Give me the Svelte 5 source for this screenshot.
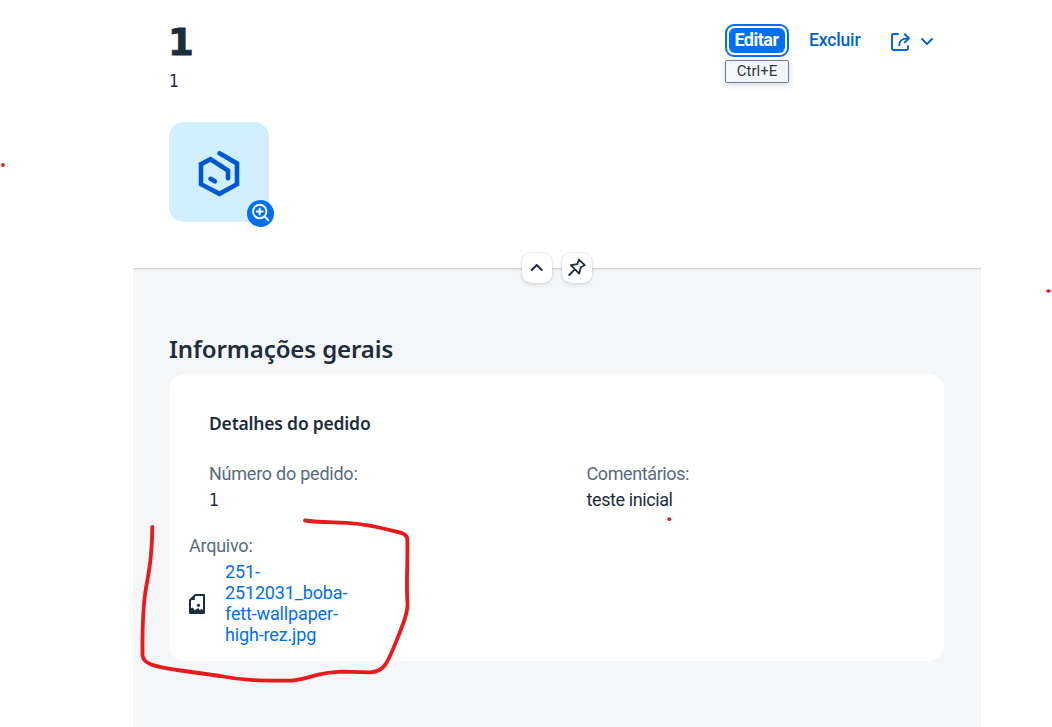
<script>
  const fileName = ['251-', '2512031_boba-', 'fett-wallpaper-', 'high-rez.jpg'];
</script>

<div class="page">
  <header>
    <div class="heading">
      <div>
        <h1>1</h1>
        <p class="sub">1</p>
      </div>
      <div class="actions">
        <div class="edit-wrap">
          <button class="edit"><span>Editar</span></button>
          <div class="tooltip">Ctrl+E</div>
        </div>
        <button class="plain">Excluir</button>
        <button class="share" aria-label="Share">
          <svg width="44" height="20" viewBox="0 0 44 20" fill="none" stroke="#0064d9" stroke-width="1.9" stroke-linecap="round" stroke-linejoin="round">
            <path d="M8 2H3.2Q2 2 2 3.2V16.8Q2 18 3.2 18H16.8Q18 18 18 16.8V14" />
            <path d="M9.3 13.3C9.3 8.8 11.2 6.6 18.4 6.3M14.8 2.2L19 6.3L14.8 10.4" />
            <path d="M32 7L37 12L42 7" />
          </svg>
        </button>
      </div>
    </div>
    <div class="avatar">
      <svg width="100" height="100" viewBox="0 0 100 100" fill="none" stroke="#0057d2" stroke-width="4.6" stroke-linecap="round" stroke-linejoin="miter">
        <path d="M50.5 31.3L68 41.4V62.2L50.5 71.8L32 62.2V42.2L41.5 37.2L59 48.6V56.3M41.5 56.8L45.8 59.3" />
      </svg>
      <div class="badge">
        <svg width="28" height="28" viewBox="0 0 28 28" fill="none" stroke="#fff" stroke-width="2" stroke-linecap="round">
          <circle cx="12.7" cy="11.5" r="6.7" />
          <path d="M17.7 16.5L21.3 20.2M12.7 8.5V14.5M9.7 11.5H15.7" />
        </svg>
      </div>
    </div>
    <div class="toggles">
      <button aria-label="Collapse">
        <svg width="30" height="30" viewBox="0 0 30 30" fill="none" stroke="#1d2d3e" stroke-width="2" stroke-linecap="round" stroke-linejoin="round"><path d="M9.7 17L14.7 12L19.7 17" /></svg>
      </button>
      <button aria-label="Pin">
        <svg width="30" height="30" viewBox="0 0 30 30" fill="none" stroke="#1d2d3e" stroke-width="1.8" stroke-linecap="round" stroke-linejoin="round"><path d="M17 6.7L22.7 12.2L18.8 14.2L17.2 20.6L8.8 12.2L15.2 11.2ZM12.6 16.6L7.2 22" /></svg>
      </button>
    </div>
  </header>
  <main>
    <h2><span>Informações gerais</span></h2>
    <section>
      <h3><span>Detalhes do pedido</span></h3>
      <div class="fields">
        <div><p class="label">Número do pedido:</p><p class="one">1</p></div>
        <div><p class="label comments">Comentários:</p><p class="value">teste inicial</p></div>
      </div>
      <div class="file">
        <p class="label">Arquivo:</p>
        <div class="file-row">
          <svg width="16" height="20" viewBox="0 0 16 20" fill="none">
            <path d="M6.3 1H15V19H1V6.3Z" stroke="#1d2d3e" stroke-width="2" stroke-linejoin="round" />
            <path d="M1 5.8L5.8 1V6H1ZM1 19V15L3.5 13.6L6 16.2L9.2 14L11 16.2L12.5 14.8L15 17V19Z" fill="#1d2d3e" />
            <circle cx="9.5" cy="11.3" r="1.6" fill="#1d2d3e" />
          </svg>
          <div class="link">{#each fileName as part}<span>{part}</span>{/each}</div>
        </div>
      </div>
    </section>
  </main>
  <svg class="ink" width="1052" height="727" viewBox="0 0 1052 727" fill="none" stroke="#e71b1b" stroke-width="3.8" stroke-linecap="round" stroke-linejoin="round">
    <path d="M152.3 527C152 556 149 572 146 588C142 611 142.5 635 142.5 655C143 665 158 667 177 670L220 676C241 680 257 681 292 680.5C308 679 318 672 342 671.7L370 672.3C385 672 388 661 396 642C402 627 408 613 407.5 603C406 583 408 558 407.3 539C407 532 395 532 379 527.5C350 520 330 524 305 520.5" />
    <g fill="#e71b1b" stroke="none"><circle cx="669.3" cy="519.2" r="1.9" /><circle cx="3" cy="165" r="1.9" /><ellipse cx="1048.5" cy="291" rx="2.3" ry="1.8" /></g>
  </svg>
</div>

<style>
  :global(body) { overflow: hidden; }
  .page { position: relative; width: 1052px; height: 727px; background: #fff; overflow: hidden; display: flex; flex-direction: column; color: #1d2d3e; font: 18px/26px Roboto, sans-serif; }
  h1, h2, h3, p { margin: 0; }
  button { border: 0; padding: 0; margin: 0; background: none; font: inherit; color: inherit; display: block; }
  svg { display: block; }
  header { position: relative; height: 268px; margin: 0 71px 0 133px; padding: 22px 0 0 36px; box-sizing: border-box; flex: none; }
  .heading { height: 100px; display: flex; justify-content: space-between; padding-right: 47px; }
  h1 { font: bold 37px/42px "DejaVu Sans", sans-serif; margin-left: -1px; -webkit-text-stroke: .9px #1d2d3e; }
  .sub { font: 17.5px/24px "DejaVu Sans Condensed", "DejaVu Sans", sans-serif; font-stretch: condensed; margin: 5px 0 0 0; }
  .one { font-family: "DejaVu Sans Condensed", "DejaVu Sans", sans-serif; font-stretch: condensed; font-size: 17.5px; }
  .actions { display: flex; align-items: flex-start; padding-top: 2px; }
  .edit-wrap { position: relative; margin-right: 20px; }
  .edit { box-sizing: border-box; width: 64px; height: 33px; border: 2.5px solid #0070f2; border-radius: 9px; padding: 2px; }
  .edit span { display: block; height: 25px; line-height: 24px; background: #0070f2; border-radius: 6px; color: #fff; font-weight: bold; font-size: 18px; letter-spacing: -.5px; text-align: center; text-indent: -1px; white-space: nowrap; }
  .tooltip { position: absolute; left: 0; top: 36px; width: 64px; height: 23px; box-sizing: border-box; border: 1px solid #6d8093; border-radius: 2px; background: #f5f6f7; box-shadow: 0 2px 6px #22355433; font-size: 15px; line-height: 21px; text-align: center; color: #32363a; }
  .plain { width: 52px; height: 31px; color: #0064d9; font-weight: 500; font-size: 17.5px; letter-spacing: -.15px; line-height: 30px; text-align: left; }
  .share { margin: 8px 0 0 29px; }
  .avatar { position: relative; width: 100px; height: 100px; background: #d1efff; border-radius: 15px; }
  .badge { position: absolute; left: 78px; top: 78px; width: 27px; height: 27px; border-radius: 50%; background: #0070f2; }
  .toggles { position: absolute; left: 389px; top: 253px; display: flex; gap: 10px; z-index: 1; }
  .toggles button { width: 30px; height: 30px; border-radius: 9px; background: #fff; box-shadow: 0 0 2px #22354838, 0 2px 4px #2235481c; }
  main { flex: 1; margin: 0 71px 0 133px; padding: 62px 37px 0 36px; background: #f5f6f7; box-shadow: inset 0 1px #d4d6d9, inset 0 3px 2px -1px #22354814; }
  h2 { font: 600 24px/38px "Noto Sans", sans-serif; height: 44px; letter-spacing: -.1px; }
  section { height: 287px; box-sizing: border-box; border-radius: 16px; background: #fff; padding: 37px 40px 0; }
  h3 { font: 600 17.5px/24px "Noto Sans", sans-serif; letter-spacing: -.2px; }
  .fields { display: grid; grid-template-columns: 377.5px 1fr; margin-top: 26px; }
  .label { color: #556b82; letter-spacing: -.24px; }
  .comments, .value { letter-spacing: -.4px; }
  .file { margin: 20px 0 0 -20px; }
  .file-row { display: flex; align-items: center; gap: 20px; margin-top: 2px; }
  .file-row svg { margin-top: 2px; }
  .link { color: #0070f2; line-height: 21px; letter-spacing: -.15px; }
  .link span { display: block; }
  .ink { position: absolute; left: 0; top: 0; pointer-events: none; z-index: 2; }
</style>
